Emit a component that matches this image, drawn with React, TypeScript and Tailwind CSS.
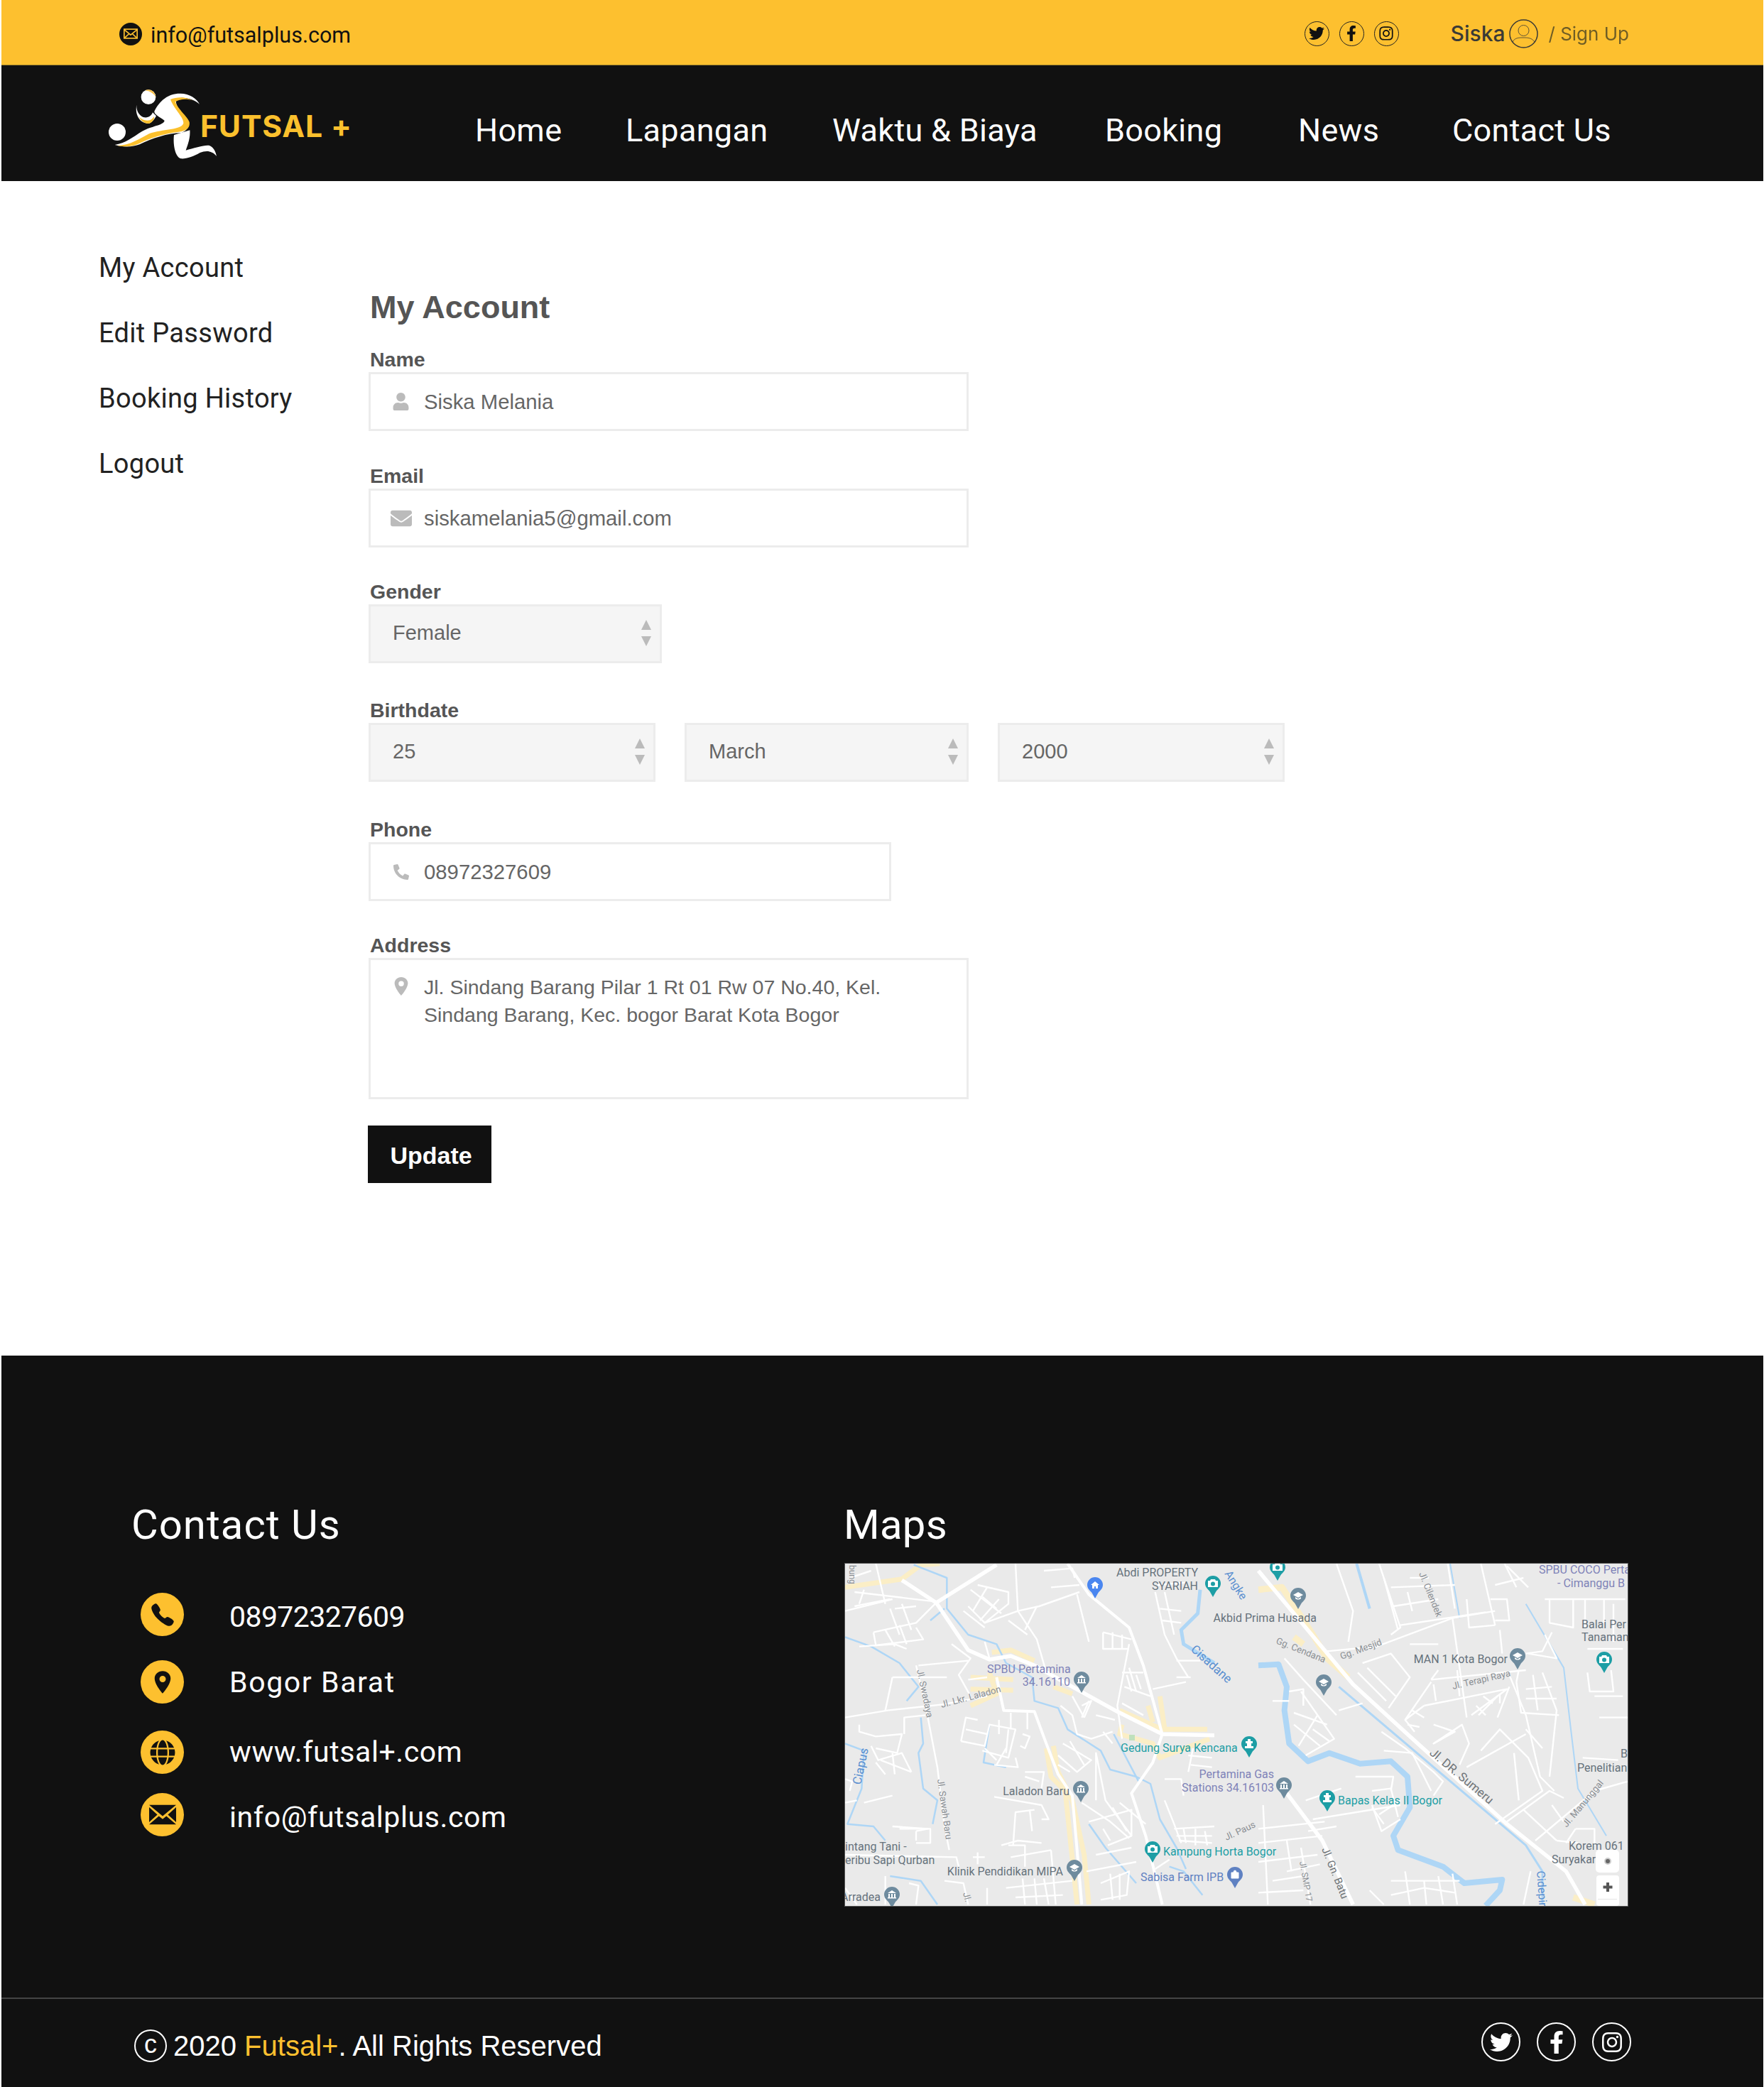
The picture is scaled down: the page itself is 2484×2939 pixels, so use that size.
import { FaTwitter, FaFacebookF, FaInstagram, FaUser, FaEnvelope, FaPhone, FaGlobe } from 'react-icons/fa';
import { IoCall, IoLocationSharp } from 'react-icons/io5';

// map traces were taken from 3x crops, so points come in as crop coords
const leftCrop = (s: string) =>
  s.split(' ').map((p) => p.split(',').map((n) => Number(n) / 3).join(',')).join(' ');
const rightCrop = (s: string) =>
  s.split(' ').map((p) => {
    const [x, y] = p.split(',').map(Number);
    return `${582 + x / 3},${y / 3}`;
  }).join(' ');

const yellowRoads = [
  '0,100 240,65 320,5 400,0',
  '530,480 710,490',
  '530,530 710,535',
  '530,600 640,550 610,460',
  '620,375 700,365 800,410',
  '880,520 960,550',
  '1160,620 1340,700 1530,700',
  '1170,680 1160,720 1300,760 1330,820 1540,740',
  '1280,600 1300,670',
  '1330,560 1350,700',
  '850,780 870,900 930,960 980,1440',
  '880,770 900,880 960,1000 1010,1230 1030,1440',
];
const yellowRoadsRight = ['0,110 100,100 230,300 290,400 380,480', '150,310 190,340', '1330,1410 1420,1440'];

const mainRoadsLeft = [
  '240,70 385,165 520,365 610,405 700,390 800,430 960,520 1150,625 1340,720 1560,725',
  '385,165 640,5',
];
const midRoadsLeft = [
  '940,0 1030,130 1200,270 1260,430 1340,720 1300,840 1210,970 1270,1150 1340,1440',
  '640,480 670,620 800,625 850,760 900,890 960,980 1000,1440',
];
const mainRoadsRight = [
  '0,30 200,270 400,510 640,730 1050,1100 1300,1300 1380,1440',
  '120,970 270,1170 400,1440',
];
const thinRoadsLeft = [
  '0,650 180,620 410,595 600,560',
  '310,430 520,410',
  '300,430 340,600 390,860 420,1110 440,1210',
  '200,480 430,480',
  '200,480 170,620',
  '120,290 300,250 380,170',
  '120,290 130,345 330,320 300,270',
  '190,190 230,300',
  '240,170 280,280',
  '60,350 210,340 260,360',
  '0,200 200,150',
  '40,120 380,160',
  '130,0 170,170',
  '560,90 690,120 690,170 590,250 520,180',
  '600,100 540,200',
  '650,150 570,240',
  '720,0 730,200 810,320 850,460',
  '590,250 730,200 820,180 990,120',
  '810,180 760,280',
  '840,30 960,20 970,60',
  '870,100 990,90',
  '980,130 1030,330',
  '1090,290 1210,320',
  '1090,290 1090,360 1200,360',
  '1130,290 1130,360',
  '1170,300 1170,360',
  '1200,340 1150,600 1170,740',
  '1170,460 1260,460',
  '1190,470 1210,540',
  '1230,470 1250,530',
  '1300,530 1440,500',
  '1310,120 1350,300 1400,400 1450,480',
  '1400,410 1500,410',
  '1350,120 1390,300',
  '1000,600 1040,580 1010,650',
  '910,600 960,640 980,720 1040,740 1130,710',
  '250,720 250,650 340,640',
  '60,680 60,710 130,730 240,720 220,800 130,780',
  '150,830 280,880',
  '200,800 210,890',
  '490,750 510,650 560,660',
  '490,750 590,770 610,680 720,700 690,820 580,790',
  '510,700 600,720',
  '720,820 730,860 630,850',
  '750,720 780,730 760,780 740,770',
  '770,630 770,700',
  '700,630 700,700',
  '920,760 1040,830 980,880 900,810',
  '950,750 1010,850',
  '900,850 950,880',
  '760,880 840,880 830,950',
  '760,900 820,920',
  '630,985 830,1020 860,1080 830,1080',
  '710,1190 720,1050 800,1040',
  '690,1190 760,1190 760,1280',
  '700,1240 870,1210',
  '750,1330 760,1440',
  '800,1330 810,1440',
  '840,1330 860,1440',
  '1080,1350 1200,1300 1190,1400 1080,1420',
  '1120,1310 1130,1420',
  '1160,1310 1160,1420',
  '1060,1000 1060,800 1100,1000 1210,1150',
  '1030,1090 1210,1040 1210,1150 1110,1190',
  '1160,1010 1270,1100',
  '1390,1120 1560,1110',
  '1410,1170 1550,1180',
  '1480,1120 1480,1190',
  '1520,1130 1530,1190',
  '1450,810 1550,820',
  '1460,850 1550,860',
  '1350,910 1420,910 1430,980',
  '1310,1290 1370,1250',
  '230,1120 360,1120 360,1180 300,1180',
  '0,1230 470,1240 480,1280',
  '540,1240 590,1240',
  '560,1220 560,1270',
  '170,1320 170,1440',
  '270,1350 310,1360 300,1440',
  '0,1370 50,1440',
  '0,910 30,920 20,960',
  // denser blocks
  '60,170 80,110',
  '20,60 110,30',
  '40,180 190,150',
  '210,190 300,180',
  '170,280 210,350',
  '230,260 260,340',
  '500,200 590,270',
  '530,110 660,210',
  '580,140 640,190',
  '690,240 770,300',
  '450,340 530,400 480,470 530,560',
  '590,330 610,400',
  '520,490 600,480',
  '650,660 650,720',
  '590,780 640,830',
  '640,850 680,780',
  '690,700 680,800',
  '130,840 170,890',
  '110,770 140,830 240,800 280,880',
  '0,1010 50,1000',
  '80,1010 200,980',
  '200,1110 350,1120 300,1130',
  '300,1130 300,1170',
  '660,1190 730,1170 830,1180',
  '780,1040 790,1130',
  '1000,1010 1120,1090 1200,1160',
  '1130,1030 1190,1130',
  '1060,1230 1210,1200',
  '1020,1300 1230,1260',
  '1090,1120 1120,1170',
  '870,1210 890,1440',
  '680,1370 960,1340',
  '720,1410 920,1400',
  '420,1340 500,1350 520,1440',
  '600,1370 600,1440',
  '1430,1120 1440,1180',
  '1400,1150 1550,1150',
  '1450,880 1470,780',
  '1350,1000 1390,1100 1420,1180',
  '960,560 1010,650',
  '1030,580 1000,650',
  '1060,640 1140,660',
  '1090,710 1130,760',
  '1320,90 1440,80',
  '1330,190 1420,200',
  '1340,240 1420,250',
  '1400,480 1460,480',
  '1180,520 1290,560',
  '1170,590 1260,640',
  '1200,440 1230,540',
];
const thinRoadsRight = [
  '330,0 400,200 380,330',
  '510,0 600,270 560,300',
  '630,120 650,200',
  '560,100 830,90',
  '800,0 830,190',
  '940,0 1000,260',
  '1040,0 1090,100',
  '600,260 960,205',
  '290,370 500,350 820,230 1000,200',
  '820,230 880,650',
  '640,340 760,340',
  '980,150 1050,150 1060,240 1000,240',
  '1020,280 1030,380',
  '1210,150 1550,150',
  '1230,150 1230,250 1330,270 1330,150',
  '1390,460 1400,540 1500,540 1490,450',
  '1130,380 1200,370 1240,290',
  '730,490 1130,450',
  '730,500 620,660 660,710',
  '700,600 1050,530 900,640',
  '740,510 750,580',
  '1060,470 1130,640 1190,900 1250,960',
  '1090,500 1110,630 1270,640',
  '1130,530 1240,520',
  '1130,570 1260,570',
  '1200,460 1260,620 1230,900',
  '950,560 990,590',
  '920,600 960,640',
  '1020,550 1020,590',
  '620,660 700,600',
  '650,620 700,650',
  '630,680 680,690',
  '110,400 190,490 330,640',
  '60,580 130,580',
  '130,540 190,530 190,600',
  '180,540 320,740 200,810',
  '150,630 290,680',
  '150,680 260,770',
  '170,770 250,640',
  '230,700 300,750',
  '340,620 440,590',
  '940,790 1020,700 1140,820 1200,960 1000,1100',
  '1080,800 1100,1000',
  '880,860 1130,720',
  '740,680 830,710 740,760 860,680 890,760 850,850',
  '520,710 620,780 740,880 780,920 740,980',
  '530,790 650,800 730,960',
  '1050,1090 1230,960 1290,990',
  '1120,1040 1260,1170',
  '1170,1170 1420,960 1560,920',
  '1340,1120 1420,1120 1420,1190',
  '1260,1170 1350,1180',
  '1150,1300 1120,1440',
  '200,1000 350,950',
  '230,1080 600,1020',
  '410,900 570,900 560,960',
  '480,1020 520,1130 600,1080',
  '0,1120 280,1090',
  '0,1180 270,1150',
  '0,1260 250,1230',
  '20,1020 40,1440',
  '180,1200 220,1440',
  '560,1340 850,1340',
  '760,1320 780,1440',
  '820,1310 840,1440',
  '620,1300 640,1440',
  '470,1380 530,1440',
  '0,1390 190,1380',
  '1440,650 1560,650',
  '1370,820 1520,830',
  // denser blocks
  '530,60 590,280',
  '570,180 760,150',
  '640,60 720,60',
  '880,150 890,270 1000,260',
  '1000,90 1120,60',
  '1050,10 1140,100',
  '440,420 560,380 640,480 550,610',
  '420,460 540,580',
  '460,440 580,560',
  '1130,700 1200,780',
  '1210,300 1260,400 1140,380',
  '760,450 730,490',
  '840,450 850,560',
  '1100,450 1090,500',
  '1160,470 1180,620',
  '1010,650 1060,520',
  '930,640 1010,560',
  '1420,560 1540,560',
  '1380,150 1380,270',
  '1460,150 1460,250',
  '1500,170 1500,330',
  '1390,360 1540,360',
  '480,960 560,950 590,1070',
  '510,1060 600,1000',
  '530,1100 480,1030',
  '210,1130 330,1110',
  '120,1170 140,1300',
  '120,1300 260,1270',
  '60,1340 190,1320',
  '1300,1180 1340,1120',
  '1240,1020 1290,1090',
  '560,1400 700,1370 830,1390',
  '700,1340 710,1440',
];
const thinWaterLeft = [
  '290,5 430,60 430,190 520,300 640,340 680,420 790,480 800,580 900,610 940,700 1080,790 1120,870 1230,900 1290,930 1330,1080 1400,1200 1440,1290',
  '360,240 420,190',
  '320,650 330,760 310,800 330,950 390,1000 370,1100',
  '0,310 110,350 230,420 310,520 260,580',
  '0,760 80,790 70,950 10,1100 120,1110 170,1170',
  '610,680 585,840 680,860',
  '1030,1100 1100,1200 1230,1350',
  '190,1320 320,1340 390,1440',
  '1370,1280 1430,1300 1510,1400',
  '1135,720 1240,920',
];
const Y = '#fbeec6';
const W = '#aed6f6';

type PinKind = 'home' | 'bank' | 'school' | 'camera' | 'tower' | 'bag';

function MapPin({ x, y, color, kind }: { x: number; y: number; color: string; kind: PinKind }) {
  return (
    <g transform={`translate(${x} ${y})`}>
      <path d="M-11 0a11 11 0 1 1 22 0c0 5-4 8-6.500 11l-4.500 8-4.500-8c-2.500-3-6.500-6-6.500-11z" fill={color} />
      {kind === 'home' && <path d="M-6 0l6-5 6 5h-2v5h-3v-3h-2v3h-3v-5z" fill="#fff" />}
      {kind === 'bank' && <path d="M-6-2l6-4 6 4zM-5-1h2v5h-2zM-1-1h2v5h-2zM3-1h2v5h-2zM-6 4h12v1.500h-12z" fill="#fff" />}
      {kind === 'school' && <path d="M-7-1l7-4 7 4-7 4zM-4 2v2c2 2 6 2 8 0v-2l-4 2.500z" fill="#fff" />}
      {kind === 'camera' && (
        <>
          <path d="M-7-4h3l1-2h6l1 2h3v9h-14z" fill="#fff" />
          <circle r="3" cy="0.500" fill={color} />
        </>
      )}
      {kind === 'tower' && <path d="M-2-7h4v3h3v3h-2v4h3v3h-12v-3h3v-4h-2v-3h3z" fill="#fff" />}
      {kind === 'bag' && <path d="M-5-3h10v8h-10zM-2-3a2 3 0 0 1 4 0" fill="#fff" stroke="#fff" />}
    </g>
  );
}

function RoadLabel({ x, y, a, size = 13, fill = '#8a8f94', children }: { x: number; y: number; a: number; size?: number; fill?: string; children: string }) {
  return (
    <text transform={`translate(${x} ${y}) rotate(${a})`} fontSize={size} fill={fill} fontFamily="Roboto, sans-serif">
      {children}
    </text>
  );
}

function Label({ x, y, end, fill = '#66727c', children }: { x: number; y: number; end?: boolean; fill?: string; children: string }) {
  return (
    <text x={x} y={y} textAnchor={end ? 'end' : 'start'} fontSize={16} fill={fill} fontFamily="Roboto, sans-serif">
      {children}
    </text>
  );
}

function MapImage() {
  const teal = '#1d9ea5';
  const slate = '#6e8b9e';
  const purple = '#7f83b8';
  const blue = '#5f81c2';
  return (
    <svg viewBox="0 0 1102 482" className="w-full h-full block">
      <rect width="1102" height="482" fill="#eaeaea" />
      {yellowRoads.map((r) => (
        <polyline key={r} points={leftCrop(r)} fill="none" stroke={Y} strokeWidth={7} strokeLinejoin="round" />
      ))}
      {yellowRoadsRight.map((r) => (
        <polyline key={r} points={rightCrop(r)} fill="none" stroke={Y} strokeWidth={9} strokeLinejoin="round" />
      ))}
      <rect x="400" y="241" width="8" height="8" fill="#bfe0bd" />
      {thinWaterLeft.map((r) => (
        <polyline key={r} points={leftCrop(r)} fill="none" stroke={W} strokeWidth={2.500} strokeLinejoin="round" />
      ))}
      <polyline points={leftCrop('1500,110 1490,210 1420,280 1430,340 1560,420')} fill="none" stroke={W} strokeWidth={5} />
      <polyline points={rightCrop('0,430 85,425 120,520 110,620 130,760 210,835 300,800 430,845 560,835 630,900 640,1030 570,1150 590,1210 780,1280 870,1350 1030,1335 1020,1380 960,1445')} fill="none" stroke={W} strokeWidth={8} strokeLinejoin="round" />
      <polyline points={rightCrop('340,520 1130,1190 1200,1300 1200,1440')} fill="none" stroke={W} strokeWidth={3} />
      <polyline points={rightCrop('1130,170 1290,440 1320,700 1350,950 1470,1150')} fill="none" stroke={W} strokeWidth={2} />
      <polyline points={rightCrop('415,0 470,190')} fill="none" stroke={W} strokeWidth={4} />
      <polyline points={rightCrop('810,0 850,230')} fill="none" stroke={W} strokeWidth={2} />
      {thinRoadsLeft.map((r) => (
        <polyline key={r} points={leftCrop(r)} fill="none" stroke="#fff" strokeWidth={2.400} strokeLinejoin="round" />
      ))}
      {thinRoadsRight.map((r) => (
        <polyline key={r} points={rightCrop(r)} fill="none" stroke="#fff" strokeWidth={2.400} strokeLinejoin="round" />
      ))}
      {midRoadsLeft.map((r) => (
        <polyline key={r} points={leftCrop(r)} fill="none" stroke="#fff" strokeWidth={4} strokeLinejoin="round" />
      ))}
      {mainRoadsLeft.map((r) => (
        <polyline key={r} points={leftCrop(r)} fill="none" stroke="#fff" strokeWidth={5.500} strokeLinejoin="round" />
      ))}
      {mainRoadsRight.map((r) => (
        <polyline key={r} points={rightCrop(r)} fill="none" stroke="#fff" strokeWidth={5.500} strokeLinejoin="round" />
      ))}

      <RoadLabel x={136} y={203} a={-15}>Jl. Lkr. Laladon</RoadLabel>
      <RoadLabel x={101} y={150} a={78}>Jl. Swadaya</RoadLabel>
      <RoadLabel x={130} y={304} a={82}>Jl. Sawah Baru</RoadLabel>
      <RoadLabel x={6} y={2} a={90} size={12}>bung</RoadLabel>
      <RoadLabel x={166} y={464} a={75}>Jl.</RoadLabel>
      <RoadLabel x={22} y={312} a={-78} size={17} fill="#5a8fd0">Ciapus</RoadLabel>
      <RoadLabel x={486} y={122} a={42} size={17} fill="#5a8fd0">Cisadane</RoadLabel>
      <RoadLabel x={534} y={14} a={58} size={16} fill="#5a8fd0">Angke</RoadLabel>
      <RoadLabel x={606} y={112} a={22}>Gg. Cendana</RoadLabel>
      <RoadLabel x={699} y={135} a={-20}>Gg. Mesjid</RoadLabel>
      <RoadLabel x={808} y={14} a={68}>Jl. Cilendek</RoadLabel>
      <RoadLabel x={856} y={177} a={-13}>Jl. Terapi Raya</RoadLabel>
      <RoadLabel x={822} y={268} a={40} size={17} fill="#6f7478">Jl. DR. Sumeru</RoadLabel>
      <RoadLabel x={671} y={402} a={68} size={15} fill="#6f7478">Jl. Gn. Batu</RoadLabel>
      <RoadLabel x={640} y={420} a={80} size={12}>Jl. SMP 17</RoadLabel>
      <RoadLabel x={1016} y={372} a={-50}>Jl. Manunggal</RoadLabel>
      <RoadLabel x={537} y={390} a={-25}>Jl. Paus</RoadLabel>
      <RoadLabel x={974} y={433} a={86} size={16} fill="#5a8fd0">Cidepir</RoadLabel>

      <Label x={497} y={18} end>Abdi PROPERTY</Label>
      <Label x={497} y={37} end>SYARIAH</Label>
      <Label x={200} y={154} fill={purple}>SPBU Pertamina</Label>
      <Label x={317} y={172} end fill={purple}>34.16110</Label>
      <Label x={316} y={326} end>Laladon Baru</Label>
      <Label x={0} y={404}>intang Tani -</Label>
      <Label x={0} y={423}>eribu Sapi Qurban</Label>
      <Label x={307} y={439} end>Klinik Pendidikan MIPA</Label>
      <Label x={50} y={475} end>Arradea</Label>
      <Label x={388} y={265} fill={teal}>Gedung Surya Kencana</Label>
      <Label x={604} y={302} end fill={purple}>Pertamina Gas</Label>
      <Label x={604} y={321} end fill={purple}>Stations 34.16103</Label>
      <Label x={448} y={411} fill={teal}>Kampung Horta Bogor</Label>
      <Label x={416} y={447} fill={blue}>Sabisa Farm IPB</Label>
      <Label x={664} y={82} end>Akbid Prima Husada</Label>
      <Label x={977} y={14} fill={purple}>SPBU COCO Perta</Label>
      <Label x={1003} y={33} fill={purple}>- Cimanggu B</Label>
      <Label x={1037} y={91}>Balai Per</Label>
      <Label x={1037} y={109}>Tanaman</Label>
      <Label x={933} y={140} end>MAN 1 Kota Bogor</Label>
      <Label x={694} y={339} fill={teal}>Bapas Kelas II Bogor</Label>
      <Label x={1092} y={273}>B</Label>
      <Label x={1031} y={293}>Penelitian</Label>
      <Label x={1019} y={403}>Korem 061</Label>
      <Label x={995} y={422}>Suryakar</Label>

      <MapPin x={352} y={30} color="#4a86f0" kind="home" />
      <MapPin x={333} y={163} color={slate} kind="bank" />
      <MapPin x={332} y={317} color={slate} kind="bank" />
      <MapPin x={323} y={428} color={slate} kind="school" />
      <MapPin x={66} y={466} color={slate} kind="bank" />
      <MapPin x={433} y={402} color={teal} kind="camera" />
      <MapPin x={569} y={254} color={teal} kind="tower" />
      <MapPin x={638} y={45} color={slate} kind="school" />
      <MapPin x={674} y={167} color={slate} kind="school" />
      <MapPin x={947} y={130} color={slate} kind="school" />
      <MapPin x={618} y={312} color={slate} kind="bank" />
      <MapPin x={679} y={330} color={teal} kind="tower" />
      <MapPin x={549} y={438} color={blue} kind="bag" />
      <MapPin x={609} y={5} color={teal} kind="camera" />
      <MapPin x={518} y={28} color={teal} kind="camera" />
      <MapPin x={1069} y={135} color={teal} kind="camera" />

      <rect x="1057" y="403" width="33" height="32" rx="5" fill="#fff" />
      <circle cx="1074" cy="419" r="4" fill="#666" stroke="#ccc" strokeWidth="2" />
      <rect x="1058" y="439" width="32" height="43" rx="4" fill="#fff" />
      <path d="M1072 449h4v4.500h4.500v4h-4.500v4.500h-4v-4.500h-4.500v-4h4.500z" fill="#555" />
      <rect x="1060" y="472" width="27" height="1" fill="#e4e4e4" />
    </svg>
  );
}

function Logo() {
  return (
    <svg viewBox="0 0 1200 450" className="w-[400px] h-[150px] block">
      <circle cx="105" cy="258" r="36" fill="#fff" />
      <circle cx="237" cy="110" r="31" fill="#fff" />
      <path d="M222 82c20-8 42 0 46 28-8-14-24-26-46-28z" fill="#f7c04a" />
      <path d="M187 143c-7 37 8 77 53 79 15-7 25-22 30-32l-15-15c-5 15-20 25-40 20-20-10-30-30-28-52z" fill="#fff" />
      <path d="M195 190c10 15 30 22 48 18 8-4 14-10 18-16 2 12-8 26-22 30-20 2-36-14-44-32z" fill="#fbc02d" />
      <path d="M262 170c23-45 58-75 108-75 40 0 70 20 83 45-23-20-58-32-93-25-20 15 10 55 35 80 25 30 10 55-20 67-55 0-125 23-175 48-30 12-70 12-105 2 45-7 75-32 115-57 40-23 90-25 95-45-15-15-45-25-43-40z" fill="#fff" />
      <path d="M330 120c35-15 70-8 95 5-30-10-60-5-75 5 10 30 50 60 60 85 5 30-20 40-50 43-60 7-120 27-160 47-30 15-65 17-95 10 55 0 95-30 135-50 50-20 140-15 145-45 0-25-40-60-55-100z" fill="#fbc02d" />
      <path d="M345 270l67-20c3 35-12 70-17 85 35-10 85-25 100-20 20 10 25 25 30 45-20-25-45-25-70-15-25 15-60 27-80 25-25-5-35-60-30-100z" fill="#fff" />
      <text x="456" y="279" fontFamily="Inter, sans-serif" fontWeight="700" fontSize="128" letterSpacing="2.500" fill="#fbc02d">FUTSAL +</text>
    </svg>
  );
}

function SmallSocial({ light }: { light?: boolean }) {
  const ring = light
    ? 'w-[55px] h-[55px] border-2 border-white text-white text-[32px] flex items-center justify-center rounded-full'
    : 'w-[35px] h-[35px] border border-[#222] text-[#111] text-[22px] flex items-center justify-center rounded-full';
  return (
    <div className={light ? 'flex gap-[23px]' : 'flex gap-[14px]'}>
      <span className={ring}><FaTwitter /></span>
      <span className={ring}><FaFacebookF /></span>
      <span className={ring}><FaInstagram /></span>
    </div>
  );
}

function MailGlyph({ className }: { className: string }) {
  return (
    <svg viewBox="0 0 36 26" className={className} fill="#111">
      <path d="M0 0h36L18 15z" />
      <path d="M0 3v20l11-10zM36 3v20L25 13zM0 26h36L23 15l-5 4-5-4z" />
    </svg>
  );
}

function SelectBox({ value, width, className = '' }: { value: string; width: string; className?: string }) {
  return (
    <div className={`${width} ${className} h-[83px] bg-[#f5f5f5] border-[3px] border-[#ececec] pl-[31px] pr-[12px] flex items-center justify-between text-[29px] text-[#666]`}>
      <span className="-mt-[2px]">{value}</span>
      <span className="flex flex-col gap-[9px] -mt-[3px]">
        <span className="w-0 h-0 border-x-[7px] border-x-transparent border-b-[14px] border-b-[#bbb]" />
        <span className="w-0 h-0 border-x-[7px] border-x-transparent border-t-[14px] border-t-[#bbb]" />
      </span>
    </div>
  );
}

function FieldLabel({ children, className = '' }: { children: string; className?: string }) {
  return <div className={`h-[36px] leading-[36px] text-[28.500px] font-bold text-[#555] ${className}`}>{children}</div>;
}

function TextBox({ icon, value, width }: { icon: React.ReactNode; value: string; width: string }) {
  return (
    <div className={`${width} h-[83px] border-[3px] border-[#ececec] bg-white flex items-center text-[29.300px] text-[#666]`}>
      <span className="w-[74px] flex justify-center text-[#bbb] pl-[11px]">{icon}</span>
      <span className="ml-[1px] mt-[1px]">{value}</span>
    </div>
  );
}

function ContactRow({ icon, text, className, textClass }: { icon: React.ReactNode; text: string; className: string; textClass: string }) {
  return (
    <div className={`flex items-center h-[61px] ${className}`}>
      <span className="w-[61px] h-[61px] rounded-full bg-[#fdc02f] flex items-center justify-center text-[#111] text-[36px] ml-[13px] shrink-0">{icon}</span>
      <span className={`ml-[64px] text-[41px] text-white font-['Roboto',sans-serif] ${textClass}`}>{text}</span>
    </div>
  );
}

const navItems = [
  { label: 'Home', w: 'w-[212px]' },
  { label: 'Lapangan', w: 'w-[291px]' },
  { label: 'Waktu & Biaya', w: 'w-[384px]' },
  { label: 'Booking', w: 'w-[272px]' },
  { label: 'News', w: 'w-[217px]' },
  { label: 'Contact Us', w: 'w-[230px]' },
];

export default function App() {
  return (
    <div className="w-[2484px] h-[2939px] bg-white pl-[2px] pr-[1px] overflow-hidden font-['Roboto',sans-serif]">
      <header>
        <div className="h-[92px] bg-[#fdc02f] border-b border-[#a98a2c] flex items-center pl-[166px]">
          <span className="w-[32px] h-[32px] rounded-full bg-[#111] flex items-center justify-center mt-[4px]">
            <svg viewBox="0 0 36 26" className="w-[20px] h-[15px]" fill="none" stroke="#fdc02f" strokeWidth="3">
              <rect x="1.500" y="1.500" width="33" height="23" />
              <path d="M2 3l16 13L34 3M2 24l12-11M34 24L22 13" />
            </svg>
          </span>
          <span className="ml-[12px] text-[30.500px] text-[#111] mt-[9px]">info@futsalplus.com</span>
          <div className="ml-auto flex items-center pr-[189px] mt-[3px]">
            <SmallSocial />
            <span className="ml-[73px] text-[30px] font-medium text-[#3a3a36] font-['Inter',sans-serif]">Siska</span>
            <span className="ml-[6px]">
              <svg viewBox="0 0 41 41" className="w-[41px] h-[41px]" fill="none" stroke="#3a3a36">
                <circle cx="20.500" cy="20.500" r="19.500" strokeWidth="1.500" />
                <circle cx="20.500" cy="16" r="7.500" strokeWidth="0.800" />
                <path d="M5 32c3-6 9-6 15-6s12 0 16 6" strokeWidth="0.800" />
              </svg>
            </span>
            <span className="ml-[14px] text-[26px] text-[#6f5d25] blur-[0.6px] font-['Inter',sans-serif]">/ Sign Up</span>
          </div>
        </div>
        <nav className="h-[163px] bg-[#111] flex items-center">
          <div className="w-[667px] pl-[128px] pt-[2px]">
            <Logo />
          </div>
          <div className="flex text-[45px] tracking-[0.300px] text-white mt-[21px]">
            {navItems.map((item) => (
              <a key={item.label} className={`${item.w} whitespace-nowrap`}>{item.label}</a>
            ))}
          </div>
        </nav>
      </header>

      <main className="h-[1654px] flex">
        <aside className="w-[517px] pl-[137px] pt-[95px] text-[38px] tracking-[0.300px] text-[#222]">
          <div className="h-[92px] leading-[54px]">My Account</div>
          <div className="h-[92px] leading-[54px]">Edit Password</div>
          <div className="h-[92px] leading-[54px]">Booking History</div>
          <div className="h-[92px] leading-[54px]">Logout</div>
        </aside>
        <section className="pt-[148px] font-['Liberation_Sans',sans-serif]">
          <h1 className="h-[60px] leading-[60px] text-[45px] font-bold text-[#555] ml-[2px]">My Account</h1>
          <FieldLabel className="mt-[25px] ml-[2px]">Name</FieldLabel>
          <TextBox icon={<FaUser size={25} />} value="Siska Melania" width="w-[845px]" />
          <FieldLabel className="mt-[45px] ml-[2px]">Email</FieldLabel>
          <TextBox icon={<FaEnvelope size={30} />} value="siskamelania5@gmail.com" width="w-[845px]" />
          <FieldLabel className="mt-[44px] ml-[2px]">Gender</FieldLabel>
          <SelectBox value="Female" width="w-[413px]" />
          <FieldLabel className="mt-[48px] ml-[2px]">Birthdate</FieldLabel>
          <div className="flex gap-[41px]">
            <SelectBox value="25" width="w-[404px]" />
            <SelectBox value="March" width="w-[400px]" />
            <SelectBox value="2000" width="w-[404px]" />
          </div>
          <FieldLabel className="mt-[49px] ml-[2px]">Phone</FieldLabel>
          <TextBox icon={<FaPhone size={22} className="-scale-x-100" />} value="08972327609" width="w-[736px]" />
          <FieldLabel className="mt-[44px] ml-[2px]">Address</FieldLabel>
          <div className="w-[845px] h-[199px] border-[3px] border-[#ececec] flex text-[28.500px] leading-[39px] text-[#666]">
            <span className="w-[74px] pl-[11px] pt-[22px] flex justify-center text-[#bbb]">
              <IoLocationSharp size={30} />
            </span>
            <p className="pt-[19px] w-[720px] ml-[1px]">Jl. Sindang Barang Pilar 1 Rt 01 Rw 07 No.40, Kel. Sindang Barang, Kec. bogor Barat Kota Bogor</p>
          </div>
          <button className="mt-[37px] -ml-[1px] w-[174px] h-[81px] pl-[4px] pt-[3px] bg-[#111] text-white text-[34px] font-bold">Update</button>
        </section>
      </main>

      <footer className="h-[1030px] bg-[#111] text-white">
        <div className="h-[904px] flex pl-[183px]">
          <div className="w-[1004px] pt-[203px]">
            <h2 className="h-[70px] leading-[70px] text-[58px] tracking-[1px]">Contact Us</h2>
            <ContactRow className="mt-[61px]" textClass="tracking-[-0.600px] mt-[9px]" icon={<IoCall />} text="08972327609" />
            <ContactRow className="mt-[34px]" textClass="tracking-[1.600px] mt-[3px]" icon={<IoLocationSharp />} text="Bogor Barat" />
            <ContactRow className="mt-[38px]" textClass="tracking-[0.600px]" icon={<FaGlobe />} text="www.futsal+.com" />
            <ContactRow className="mt-[27px]" textClass="tracking-[0.600px] mt-[9px]" icon={<MailGlyph className="w-[38px] h-[29px]" />} text="info@futsalplus.com" />
          </div>
          <div className="pt-[203px] -ml-[1px]">
            <h2 className="h-[70px] leading-[70px] text-[58px] tracking-[0.300px]">Maps</h2>
            <div className="mt-[19px] ml-[1px] w-[1104px] h-[484px] border border-[#555]">
              <MapImage />
            </div>
          </div>
        </div>
        <div className="h-[125px] border-t-2 border-[#444] flex items-center pl-[187px] pr-[186px]">
          <span className="w-[46px] h-[46px] border-2 border-white rounded-full flex items-center justify-center text-[36px] leading-none pb-[4px] font-['Liberation_Sans',sans-serif] mt-[8px]">c</span>
          <span className="ml-[9px] text-[40px] font-['Liberation_Sans',sans-serif] mt-[8px]">
            2020 <span className="text-[#fdc02f]">Futsal+</span>. All Rights Reserved
          </span>
          <div className="ml-auto -mt-[2px]">
            <SmallSocial light />
          </div>
        </div>
      </footer>
    </div>
  );
}
